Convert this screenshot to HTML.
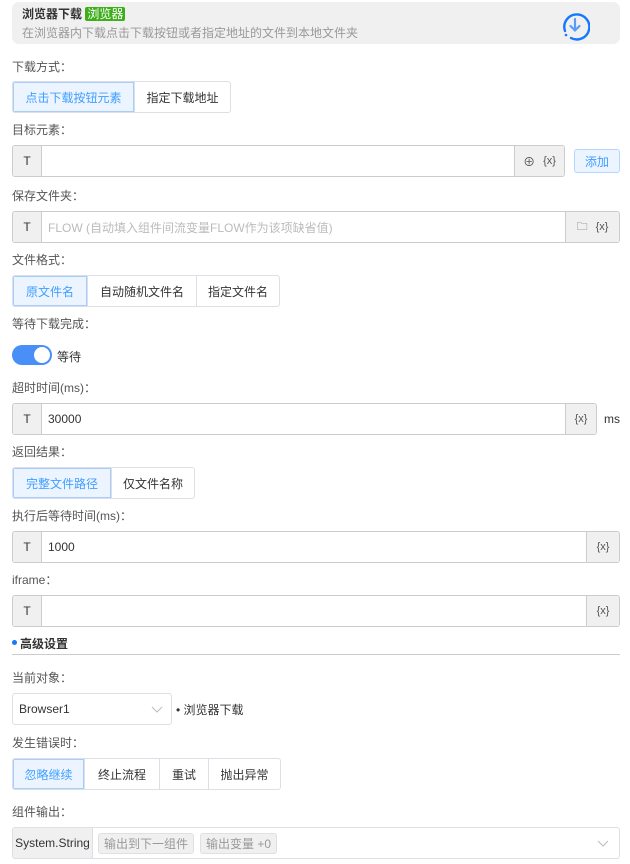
<!DOCTYPE html>
<html><head><meta charset="utf-8"><style>
*{box-sizing:border-box;margin:0;padding:0}
body{width:630px;height:864px;background:#fff;font-family:"Liberation Sans","Noto Sans CJK SC",sans-serif;font-size:12px;color:#333;position:relative;overflow:hidden}
.a{position:absolute}
.lbl{position:absolute;left:12px;color:#555;font-size:12px;line-height:14px;margin-top:1px}
.grp{position:absolute;display:flex;height:32px;border:1px solid #dcdfe6;border-radius:3px;overflow:hidden}
.grp div{height:100%;display:flex;align-items:center;justify-content:center;border-left:1px solid #dcdfe6;color:#333;font-size:12px}
.grp div:first-child{border-left:none;background:#ecf5ff;color:#409eff;outline:1px solid #a6cdfb;outline-offset:-1px}
.inp{position:absolute;left:12px;height:32px;border:1px solid #ccc;border-radius:3px;display:flex;overflow:hidden;background:#fff}
.t{width:29px;background:#f0f0f0;border-right:1px solid #ccc;display:flex;align-items:center;justify-content:center;font-size:12px;color:#333;font-weight:normal}
.v{flex:1;display:flex;align-items:center;padding-left:6px;font-size:12px;color:#333}
.r{background:#f0f0f0;border-left:1px solid #ccc;display:flex;align-items:center;justify-content:center;gap:8px;font-size:11px;color:#555}
</style></head><body>
<div class="a" style="left:12px;top:2px;width:608px;height:42px;background:#f0f0f0;border-radius:7px"></div>
<div class="a" style="left:22px;top:7px;font-size:12px;font-weight:bold;color:#333;line-height:14px">浏览器下载 <span style="background:#3dae1a;color:#fff;font-weight:normal;padding:0 2px;border-radius:2px">浏览器</span></div>
<div class="a" style="left:22px;top:26px;font-size:12px;color:#999;line-height:14px">在浏览器内下载点击下载按钮或者指定地址的文件到本地文件夹</div>
<svg class="a" style="left:560px;top:11px" width="30" height="30" viewBox="0 0 30 30"><path d="M5 20A12.5 12.5 0 1 1 11 27" fill="none" stroke="#1677ff" stroke-width="2.4" stroke-linecap="round"/><circle cx="6" cy="24" r="1.3" fill="#1677ff"/><path d="M15 8v11M10.5 15l4.5 4.5 4.5-4.5" fill="none" stroke="#5a9cf8" stroke-width="2.2" stroke-linecap="round"/></svg>

<div class="lbl" style="top:59px">下载方式：</div>
<div class="grp" style="left:12px;top:81px;width:219px"><div style="width:121px">点击下载按钮元素</div><div style="flex:1">指定下载地址</div></div>

<div class="lbl" style="top:122px">目标元素：</div>
<div class="inp" style="top:145px;width:553px"><div class="t">T</div><div class="v"></div><div class="r" style="width:50px"><span style="font-size:12px">⊕</span><span>{x}</span></div></div>
<div class="a" style="left:574px;top:149px;width:46px;height:24px;background:#ecf5ff;border:1px solid #b3d8ff;border-radius:3px;color:#409eff;display:flex;align-items:center;justify-content:center">添加</div>

<div class="lbl" style="top:188px">保存文件夹：</div>
<div class="inp" style="top:211px;width:608px"><div class="t">T</div><div class="v" style="color:#bbb">FLOW (自动填入组件间流变量FLOW作为该项缺省值)</div><div class="r" style="width:54px"><span>🗀</span><span>{x}</span></div></div>

<div class="lbl" style="top:252px">文件格式：</div>
<div class="grp" style="left:12px;top:275px;width:268px"><div style="width:74px">原文件名</div><div style="width:109px">自动随机文件名</div><div style="flex:1">指定文件名</div></div>

<div class="lbl" style="top:316px">等待下载完成：</div>
<div class="a" style="left:12px;top:345px;width:40px;height:20px;background:#4a8ef7;border-radius:10px"><div class="a" style="left:22px;top:2px;width:16px;height:16px;background:#fff;border-radius:8px"></div></div>
<div class="a" style="left:57px;top:348px">等待</div>

<div class="lbl" style="top:380px">超时时间(ms)：</div>
<div class="inp" style="top:403px;width:585px"><div class="t">T</div><div class="v">30000</div><div class="r" style="width:31px">{x}</div></div>
<div class="a" style="left:604px;top:412px">ms</div>

<div class="lbl" style="top:444px">返回结果：</div>
<div class="grp" style="left:12px;top:467px;width:183px"><div style="width:98px">完整文件路径</div><div style="flex:1">仅文件名称</div></div>

<div class="lbl" style="top:508px">执行后等待时间(ms)：</div>
<div class="inp" style="top:531px;width:608px"><div class="t">T</div><div class="v">1000</div><div class="r" style="width:33px">{x}</div></div>

<div class="lbl" style="top:572px">iframe：</div>
<div class="inp" style="top:595px;width:608px"><div class="t">T</div><div class="v"></div><div class="r" style="width:33px">{x}</div></div>

<div class="a" style="left:12px;top:640px;width:5px;height:5px;border-radius:50%;background:#1677ff"></div>
<div class="a" style="left:20px;top:635px;font-weight:bold;color:#333">高级设置</div>
<div class="a" style="left:12px;top:654px;width:608px;height:1px;background:#ccc"></div>

<div class="lbl" style="top:670px">当前对象：</div>
<div class="a" style="left:12px;top:693px;width:160px;height:32px;border:1px solid #dcdfe6;border-radius:3px;padding-left:6px;display:flex;align-items:center">Browser1<svg class="a" style="right:8px;top:12px" width="12" height="8"><path d="M1 1l5 5 5-5" fill="none" stroke="#bbb"/></svg></div>
<div class="a" style="left:176px;top:701px">• 浏览器下载</div>

<div class="lbl" style="top:735px">发生错误时：</div>
<div class="grp" style="left:12px;top:758px;width:269px"><div style="width:71px">忽略继续</div><div style="width:75px">终止流程</div><div style="width:49px">重试</div><div style="flex:1">抛出异常</div></div>

<div class="lbl" style="top:804px">组件输出：</div>
<div class="inp" style="top:827px;width:608px;border-color:#dcdfe6"><div class="t" style="width:80px;border-color:#dcdfe6">System.String</div><div class="v" style="gap:6px;padding-left:5px"><span style="background:#f0f0f0;border:1px solid #e0e0e0;border-radius:3px;padding:1px 5px;color:#999">输出到下一组件</span><span style="background:#f0f0f0;border:1px solid #e0e0e0;border-radius:3px;padding:1px 5px;color:#999">输出变量 +0</span></div><svg style="margin:12px 10px 0 0" width="12" height="8"><path d="M1 1l5 5 5-5" fill="none" stroke="#bbb"/></svg></div>
</body></html>
